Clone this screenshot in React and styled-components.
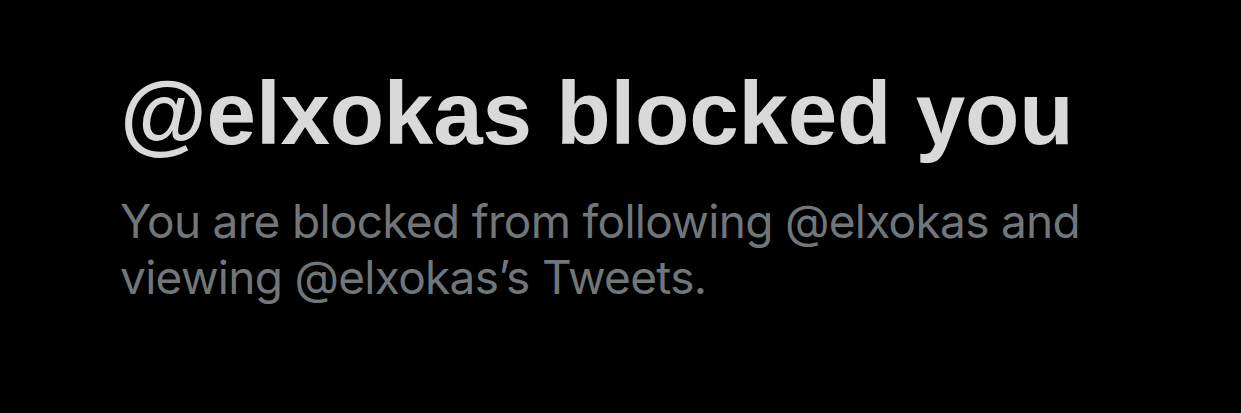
import styled, { createGlobalStyle } from "styled-components";

const GlobalStyle = createGlobalStyle`
  html, body {
    margin: 0;
    padding: 0;
    background: #000;
  }
`;

const Page = styled.main`
  width: 1241px;
  height: 413px;
  background: #000;
  box-sizing: border-box;
  padding: 69px 0 0 120px;
  display: flex;
  flex-direction: column;
  gap: 36px;
`;

const Title = styled.h1`
  margin: 0;
  font-family: "Liberation Sans", Arial, sans-serif;
  font-weight: 700;
  font-size: 89px;
  line-height: 88px;
  letter-spacing: -0.2px;
  color: #d9d9d9;
  white-space: nowrap;
`;

const Subtitle = styled.p`
  margin: 0;
  max-width: 1010px;
  font-family: Inter, "Liberation Sans", sans-serif;
  font-weight: 400;
  font-size: 46px;
  line-height: 56px;
  letter-spacing: -0.7px;
  color: #71767b;
`;

const App = () => {
  return (
    <>
      <GlobalStyle />
      <Page>
        <Title>@elxokas blocked you</Title>
        <Subtitle>
          You are blocked from following @elxokas and viewing @elxokas’s
          Tweets.
        </Subtitle>
      </Page>
    </>
  );
};

export default App;
